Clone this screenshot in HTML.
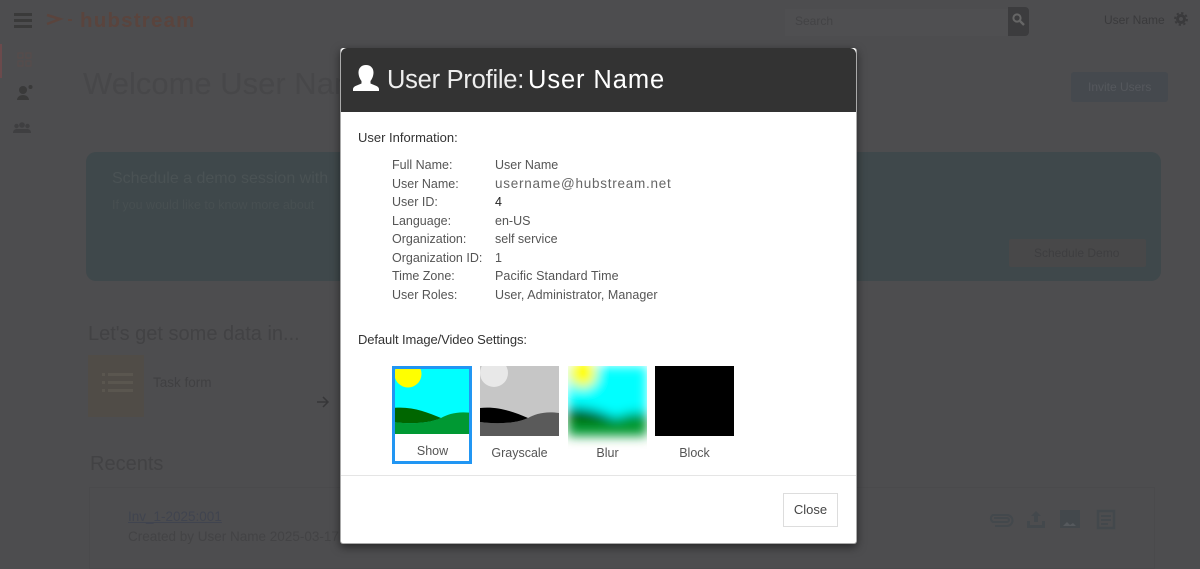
<!DOCTYPE html>
<html lang="en"><head><meta charset="utf-8"><title>User Profile</title>
<style>
*{box-sizing:border-box}
html,body{margin:0;padding:0}
body{width:1200px;height:569px;overflow:hidden;background:#4d4d4f;position:relative;font-family:"Liberation Sans",sans-serif;color:#3f3f41}
.a{position:absolute;white-space:nowrap}
#m .a{color:#555}
#m{position:absolute;left:340px;top:48px;width:517px;height:496px;background:#fff;border:1px solid #aaa;border-top:0;border-radius:3px;box-shadow:0 3px 9px rgba(0,0,0,.5);overflow:hidden}
#h{position:absolute;left:0;top:0;width:100%;height:64px;background:#333;border-radius:6px 6px 0 0}
.l{font-size:12.5px;left:51px}
.v{font-size:12.5px;left:154px}
.cap{font-size:12.5px;text-align:center;width:79px}
</style></head><body>
<!-- page behind -->
<div class="a" style="left:14px;top:13px;width:18px;height:3px;background:#3a3a3a;box-shadow:0 6px 0 #3a3a3a,0 12px 0 #3a3a3a"></div>
<svg class="a" style="left:46px;top:13px" width="28" height="14" viewBox="0 0 28 14"><path d="M1 2l13 4-13 5" fill="none" stroke="#5a443d" stroke-width="2.500"/><path d="M22 7h4" stroke="#5a443d" stroke-width="2"/></svg>
<div class="a" style="left:80px;top:9px;font-size:20.500px;line-height:24px;font-weight:bold;color:#5a443d;letter-spacing:1.200px">hubstream</div>
<div class="a" style="left:0;top:44px;width:2px;height:34px;background:#6b4a4c"></div>
<svg class="a" style="left:17px;top:52px" width="15" height="15" viewBox="0 0 15 15" fill="none" stroke="#574b4b" stroke-width="1.200"><path d="M1 1h5v5H1zM9 1h5v5H9zM1 9h5v5H1zM9 9h5v5H9z"/></svg>
<svg class="a" style="left:14px;top:84px" width="20" height="18" viewBox="0 0 20 18"><circle cx="9" cy="6" r="4" fill="#3a3a3a"/><path d="M3 16c0-3 3-5 6-5s6 2 6 5z" fill="#3a3a3a"/><circle cx="16.500" cy="3" r="2" fill="#3a3a3a"/></svg>
<svg class="a" style="left:12px;top:121px" width="20" height="14" viewBox="0 0 20 14" fill="#3f3f41"><circle cx="4.500" cy="5" r="2.200"/><circle cx="10" cy="4" r="2.800"/><circle cx="15.500" cy="5" r="2.200"/><path d="M1 12c0-3 2-4 4-4h10c2 0 4 1 4 4z"/></svg>
<div class="a" style="left:83px;top:66px;font-size:31px;color:#474749">Welcome User Name</div>
<div class="a" style="left:785px;top:9px;width:223px;height:27px;background:#4f4f51"></div>
<div class="a" style="left:795px;top:14px;font-size:12px;color:#434345">Search</div>
<div class="a" style="left:1008px;top:7px;width:21px;height:29px;background:#3c3c3e;border-radius:0 4px 4px 0"></div>
<svg class="a" style="left:1011px;top:12px" width="15" height="15" viewBox="0 0 15 15"><circle cx="6" cy="6" r="3.600" fill="none" stroke="#666" stroke-width="2"/><path d="M9 9l4 4" stroke="#666" stroke-width="2.400"/></svg>
<div class="a" style="left:1104px;top:13px;font-size:12px;color:#3a3a3c">User Name</div>
<svg class="a" style="left:1174px;top:12px" width="14" height="14" viewBox="0 0 14 14"><circle cx="7" cy="7" r="3.500" fill="none" stroke="#3a3a3c" stroke-width="3"/><circle cx="7" cy="7" r="6" fill="none" stroke="#3a3a3c" stroke-width="1.800" stroke-dasharray="2.300 2.400"/></svg>
<div class="a" style="left:1071px;top:72px;width:97px;height:30px;background:#45494e;border-radius:3px"></div>
<div class="a" style="left:1088px;top:80px;font-size:12px;color:#55585d">Invite Users</div>
<div class="a" style="left:86px;top:152px;width:1075px;height:129px;background:#3f484b;border-radius:10px"></div>
<div class="a" style="left:112px;top:170px;font-size:16px;color:#4a5254">Schedule a demo session with</div>
<div class="a" style="left:112px;top:198px;font-size:12.500px;color:#474f51">If you would like to know more about</div>
<div class="a" style="left:1009px;top:239px;width:137px;height:28px;background:#484849;border-radius:2px"></div>
<div class="a" style="left:1034px;top:246px;font-size:12px;color:#3e3e40">Schedule Demo</div>
<div class="a" style="left:88px;top:323px;font-size:20px;color:#424244">Let's get some data in...</div>
<div class="a" style="left:88px;top:355px;width:56px;height:62px;background:#504c47"></div>
<div class="a" style="left:102px;top:373px;width:3px;height:3px;background:#5a564f;box-shadow:0 8px 0 #5a564f,0 16px 0 #5a564f"></div>
<div class="a" style="left:108px;top:373px;width:25px;height:3px;background:#5a564f;box-shadow:0 8px 0 #5a564f,0 16px 0 #5a564f"></div>
<div class="a" style="left:153px;top:375px;font-size:13.500px;color:#404042">Task form</div>
<svg class="a" style="left:316px;top:395px" width="14" height="14" viewBox="0 0 14 14"><path d="M1 7h11M7 2l5 5-5 5" fill="none" stroke="#363638" stroke-width="1.500"/></svg>
<div class="a" style="left:90px;top:453px;font-size:20px;color:#424244">Recents</div>
<div class="a" style="left:89px;top:487px;width:1066px;height:82px;border:1px solid #4a4a4c"></div>
<div class="a" style="left:128px;top:509px;font-size:13.500px;color:#40444f;text-decoration:underline">Inv_1-2025:001</div>
<div class="a" style="left:128px;top:529px;font-size:13.500px;color:#434345">Created by User Name 2025-03-17</div>
<svg class="a" style="left:985px;top:508px" width="132" height="22" viewBox="0 0 132 22" fill="#43484c"><path d="M10 18h12a5 5 0 0 0 0-11H8a4 4 0 0 0 0 7h14a2 2 0 0 0 0-4H9" fill="none" stroke="#43484c" stroke-width="2"/><path d="M51 3l5 5h-3v6h-4V8h-3zM42 13h3v4h12v-4h3v7H42z"/><path d="M75 2h20v18H75z"/><path d="M78 18l4-4 3 3 3-2 3 3z" fill="#55595d"/><path d="M113 3h16v17h-16z" fill="none" stroke="#43484c" stroke-width="2.500"/><path d="M116 7h10v2h-10zM116 11h10v2h-10zM116 15h7v2h-7z"/></svg>

<!-- modal -->
<div id="m">
<div id="h"></div>
<svg class="a" style="left:12px;top:17px" width="26" height="26" viewBox="0 0 26 26" fill="#fff"><path d="M13 0c4.500 0 7.500 3 7.500 7.500 0 3.500-1.500 6.500-3 8.500v2.500l6 2.500c1.500.6 2.500 2 2.500 3v2H0v-2c0-1 1-2.400 2.500-3l6-2.500V16c-1.500-2-3-5-3-8.500C5.500 3 8.500 0 13 0z"/></svg>
<div class="a" style="left:46px;top:16px;font-size:25.500px;line-height:32px;letter-spacing:-.25px"><span style="color:#eee">User Profile:</span></div>
<div class="a" style="left:187px;top:16px;font-size:25.500px;line-height:32px;letter-spacing:.9px"><span style="color:#fff">User Name</span></div>
<div class="a" style="left:17px;top:82px;font-size:13px"><span style="color:#333">User Information:</span></div>
<div class="a l" style="top:110px">Full Name:</div><div class="a v" style="top:110px">User Name</div>
<div class="a l" style="top:129px">User Name:</div><div class="a v" style="top:128px;font-size:13.500px;letter-spacing:.75px"><span style="color:#666">username@hubstream.net</span></div>
<div class="a l" style="top:147px">User ID:</div><div class="a v" style="top:147px"><span style="color:#222">4</span></div>
<div class="a l" style="top:166px">Language:</div><div class="a v" style="top:166px">en-US</div>
<div class="a l" style="top:184px">Organization:</div><div class="a v" style="top:184px">self service</div>
<div class="a l" style="top:203px">Organization ID:</div><div class="a v" style="top:203px">1</div>
<div class="a l" style="top:221px">Time Zone:</div><div class="a v" style="top:221px;letter-spacing:.1px">Pacific Standard Time</div>
<div class="a l" style="top:240px">User Roles:</div><div class="a v" style="top:240px;letter-spacing:.05px">User, Administrator, Manager</div>
<div class="a" style="left:17px;top:284px;font-size:13px;letter-spacing:-.1px"><span style="color:#333">Default Image/Video Settings:</span></div>

<svg width="0" height="0" style="position:absolute"><defs>
<g id="s"><rect width="79" height="70" fill="#0ff"/><circle cx="15" cy="8" r="13.500" fill="#ff0"/><path d="M0 56c15 2 35 2 48-4 7-4 17-7 31-5v23H0z" fill="#093"/><path d="M0 42c18-2 34 4 48 10-13 6-33 6-48 4z" fill="#060"/></g>
<g id="g"><rect width="79" height="70" fill="#c6c6c6"/><circle cx="14" cy="7" r="14" fill="#e8e8e8"/><path d="M0 56c15 2 35 2 48-4 7-4 17-7 31-5v23H0z" fill="#5a5a5a"/><path d="M0 42c18-2 34 4 48 10-13 6-33 6-48 4z" fill="#000"/></g>
<filter id="b" x="-20%" y="-20%" width="140%" height="140%"><feGaussianBlur stdDeviation="5.500"/></filter>
<clipPath id="c"><rect x="0" y="0" width="79" height="90"/></clipPath>
</defs></svg>

<div class="a" style="left:51px;top:318px;width:80px;height:98px;border:3px solid #2196f3;overflow:hidden"><svg width="74" height="65" viewBox="2 3 74 65" style="display:block"><use href="#s"/></svg></div>
<div class="a cap" style="left:52px;top:396px">Show</div>
<svg class="a" style="left:139px;top:318px" width="79" height="70"><use href="#g"/></svg>
<div class="a cap" style="left:139px;top:398px">Grayscale</div>
<svg class="a" style="left:227px;top:318px" width="79" height="90"><g clip-path="url(#c)"><g filter="url(#b)"><use href="#s"/></g></g></svg>
<div class="a cap" style="left:227px;top:398px">Blur</div>
<div class="a" style="left:314px;top:318px;width:79px;height:70px;background:#000"></div>
<div class="a cap" style="left:314px;top:398px">Block</div>
<div class="a" style="left:0;top:427px;width:100%;height:1px;background:#e5e5e5"></div>
<div class="a" style="left:442px;top:445px;width:55px;height:34px;border:1px solid #ddd;font-size:13px;line-height:32px;text-align:center"><span style="color:#444">Close</span></div>
</div>
</body></html>
